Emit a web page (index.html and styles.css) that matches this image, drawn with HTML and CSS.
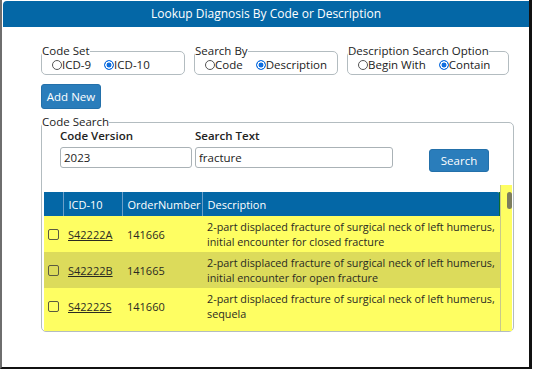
FILE: index.html
```html
<!DOCTYPE html>
<html lang="en">
<head>
    <meta charset="UTF-8">
    <meta name="viewport" content="width=device-width, initial-scale=1.0">
    <title>Lookup Diagnosis</title>
    <link rel="stylesheet" href="styles.css">
</head>
<body>
    <div class="dialog">
        <div class="titlebar">Lookup Diagnosis By Code or Description</div>
        <div class="content">
            <div class="options">
                <fieldset class="opt opt-codeset">
                    <legend>Code Set</legend>
                    <div class="radios">
                        <label><input type="radio" name="codeset">ICD-9</label>
                        <label><input type="radio" name="codeset" checked>ICD-10</label>
                    </div>
                </fieldset>
                <fieldset class="opt opt-searchby">
                    <legend>Search By</legend>
                    <div class="radios">
                        <label><input type="radio" name="searchby">Code</label>
                        <label><input type="radio" name="searchby" checked>Description</label>
                    </div>
                </fieldset>
                <fieldset class="opt opt-desc">
                    <legend>Description Search Option</legend>
                    <div class="radios">
                        <label><input type="radio" name="descopt">Begin With</label>
                        <label><input type="radio" name="descopt" checked>Contain</label>
                    </div>
                </fieldset>
            </div>

            <button class="btn btn-add">Add New</button>

            <fieldset class="code-search">
                <legend>Code Search</legend>
                <div class="search-row">
                    <div class="field field-version">
                        <label>Code Version</label>
                        <input type="text" value="2023">
                    </div>
                    <div class="field field-text">
                        <label>Search Text</label>
                        <input type="text" value="fracture">
                    </div>
                    <button class="btn btn-search">Search</button>
                </div>

                <div class="grid">
                    <div class="grid-main">
                        <div class="grid-view">
                            <table class="results">
                                <colgroup>
                                    <col class="col-check">
                                    <col class="col-code">
                                    <col class="col-order">
                                    <col class="col-desc">
                                </colgroup>
                                <thead>
                                    <tr>
                                        <th></th>
                                        <th>ICD-10</th>
                                        <th>OrderNumber</th>
                                        <th>Description</th>
                                    </tr>
                                </thead>
                                <tbody>
                                    <tr>
                                        <td><input type="checkbox"></td>
                                        <td><a href="#">S42222A</a></td>
                                        <td>141666</td>
                                        <td class="desc">2-part displaced fracture of surgical neck of left humerus, initial encounter for closed fracture</td>
                                    </tr>
                                    <tr class="alt">
                                        <td><input type="checkbox"></td>
                                        <td><a href="#">S42222B</a></td>
                                        <td>141665</td>
                                        <td class="desc">2-part displaced fracture of surgical neck of left humerus, initial encounter for open fracture</td>
                                    </tr>
                                    <tr>
                                        <td><input type="checkbox"></td>
                                        <td><a href="#">S42222S</a></td>
                                        <td>141660</td>
                                        <td class="desc">2-part displaced fracture of surgical neck of left humerus, sequela</td>
                                    </tr>
                                </tbody>
                            </table>
                        </div>
                    </div>
                    <div class="grid-scroll"><div class="thumb"></div></div>
                </div>
            </fieldset>
        </div>
    </div>
</body>
</html>
```

FILE: styles.css
```css
* {
    box-sizing: border-box;
}
body {
    margin: 0;
    background: #fff;
    font-family: "Open Sans", "Noto Sans", sans-serif;
    font-size: 11.5px;
    color: #222;
}
.dialog {
    width: 532px;
    height: 369px;
    padding: 1px 0 0 1px;
    border-left: 2px solid #6e6e6e;
    border-right: 3px solid #111;
    border-bottom: 2px solid #111;
    overflow: hidden;
}
.titlebar {
    height: 26px;
    line-height: 25px;
    background: #0467a6;
    border-top-left-radius: 4px;
    color: #fff;
    text-align: center;
    font-size: 12px;
}
.content {
    padding: 18px 0 0 38px;
}
.options {
    display: flex;
}
fieldset {
    margin: 0;
    padding: 0;
    border: 1px solid #b3bcc0;
    border-radius: 5px;
    min-width: 0;
}
legend {
    padding: 0;
    line-height: 12px;
}
.opt {
    padding-bottom: 1px;
}
.opt-codeset {
    width: 144px;
}
.opt-searchby {
    width: 144px;
    margin-left: 9px;
}
.opt-desc {
    width: 162px;
    margin-left: 9px;
}
.radios {
    display: flex;
    gap: 13px;
    padding-left: 10px;
    line-height: 16px;
}
.radios label {
    display: flex;
    align-items: center;
}
input[type="radio"] {
    appearance: none;
    width: 10px;
    height: 10px;
    margin: 0;
    border: 1px solid #555;
    border-radius: 50%;
    background: #fff;
}
input[type="radio"]:checked {
    border-color: #0f6ee0;
    background: radial-gradient(circle, #0f6ee0 0 40%, #fff 48% 62%, #0f6ee0 70%);
}
.btn {
    border: 1px solid #2370aa;
    border-radius: 3px;
    background: #2a7dbb;
    color: #fff;
    font-family: inherit;
    font-size: 11.5px;
    padding: 0;
    cursor: pointer;
}
.btn-add {
    display: block;
    width: 60px;
    height: 25px;
    margin-top: 9px;
}
.code-search {
    width: 473px;
    margin-top: 7px;
}
.search-row {
    display: flex;
    padding-left: 18px;
}
.field {
    display: flex;
    flex-direction: column;
}
.field label {
    line-height: 16px;
    font-weight: 600;
    color: #222;
}
.field input {
    margin-top: 3px;
    height: 21px;
    border: 1px solid #aab2b6;
    border-radius: 3px;
    padding: 0 3px;
    font-family: inherit;
    font-size: 11.5px;
    color: #222;
}
.field-version input {
    width: 132px;
}
.field-text {
    margin-left: 3px;
}
.field-text input {
    width: 198px;
}
.btn-search {
    width: 60px;
    height: 23px;
    margin: 21px 0 0 36px;
}
.grid {
    display: flex;
    height: 146px;
    margin: 13px 0 0 2px;
}
.grid-main {
    width: 456px;
    padding-top: 7px;
    display: flex;
    flex-direction: column;
}
.grid-view {
    flex: 1;
    overflow: hidden;
    background: #fefe62;
}
.results {
    width: 456px;
    border-collapse: collapse;
    table-layout: fixed;
    font-size: 11px;
}
.col-check { width: 19px; }
.col-code { width: 59px; }
.col-order { width: 80px; }
.col-desc { width: 298px; }
.results thead tr {
    background: #0467a6;
}
.results th {
    height: 24px;
    padding: 0 5px;
    color: #fff;
    font-size: 11px;
    font-weight: normal;
    text-align: left;
    white-space: nowrap;
    border-left: 1px solid #6c9fc9;
}
.results th:first-child {
    border-left: none;
}
.results th:last-child {
    border-right: 2px solid #0e6a2c;
    border-top-right-radius: 3px;
}
.results td {
    height: 36px;
    padding: 3px 5px;
    line-height: 15px;
    color: #2a2a22;
    vertical-align: middle;
}
.results td:first-child {
    padding: 0 0 0 4px;
}
.results td.desc {
    padding-right: 0;
    font-size: 10.8px;
}
.results tr.alt {
    background: #dcdb5b;
}
.results a {
    color: #2a2a22;
}
input[type="checkbox"] {
    appearance: none;
    display: block;
    width: 11px;
    height: 11px;
    margin: 0;
    border: 1px solid #5a5a40;
    border-radius: 2px;
    background: transparent;
}
.grid-scroll {
    width: 12px;
    background: #fefe62;
    border-left: 1px solid #c9c98a;
    padding: 7px 0 0 6px;
}
.thumb {
    width: 5px;
    height: 17px;
    border-radius: 3px;
    background: #7d7d5e;
}
```
